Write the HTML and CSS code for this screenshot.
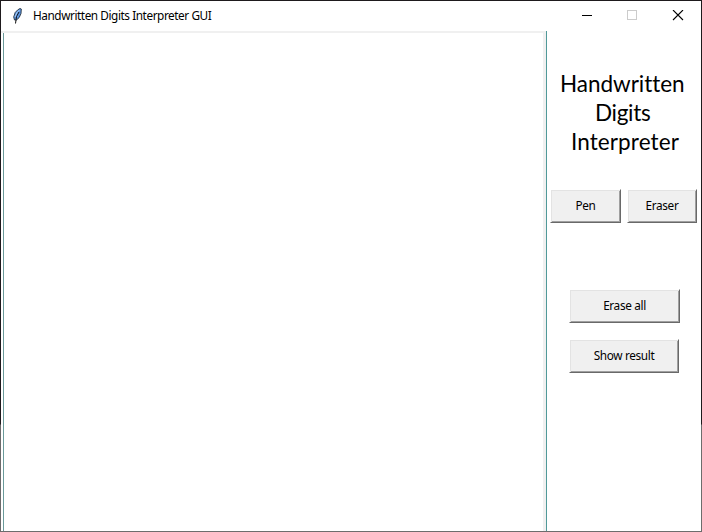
FILE: index.html
```html
<!DOCTYPE html>
<html lang="en">
<head>
<meta charset="utf-8">
<title>Handwritten Digits Interpreter GUI</title>
<link rel="stylesheet" href="styles.css">
</head>
<body>
<div class="window">
  <header class="titlebar">
    <svg class="feather" width="12" height="18" viewBox="0 0 12 18">
      <path d="M9 1.500 L10.300 2 L10 6.500 L8.200 10.500 L5.500 13 L3.500 13 L2.700 10 L4.200 5.500 L6.800 2.800 Z" fill="#5c95e0" stroke="#26323e" stroke-width=".9"/>
      <path d="M8 5 L5.500 9.500 L4.500 16.500" fill="none" stroke="#111" stroke-width="1"/>
      <path d="M4 10 L6 5.500 L8.500 3" fill="none" stroke="#a9cdf5" stroke-width="1"/>
    </svg>
    <span class="title">Handwritten Digits Interpreter GUI</span>
    <svg class="controls" width="103" height="12" viewBox="0 0 103 12" shape-rendering="crispEdges">
      <path d="M0 5.500H10" stroke="#000"/>
      <rect x="45.500" y="0.500" width="9" height="9" fill="none" stroke="#ccc"/>
      <path d="M91 0L101 10M101 0L91 10" stroke="#000" stroke-width="1.100" shape-rendering="auto"/>
    </svg>
  </header>
  <main class="content">
    <div class="canvas"></div>
    <aside class="panel">
      <h1><span class="l1">Handwritten</span><span class="l2">Digits</span><span class="l3">Interpreter</span></h1>
      <div class="tools">
        <button class="pen">Pen</button>
        <button class="eraser">Eraser</button>
      </div>
      <button class="clear">Erase all</button>
      <button class="result">Show result</button>
    </aside>
  </main>
</div>
</body>
</html>
```
FILE: styles.css
```css
* { box-sizing: border-box; }
body { margin: 0; background: #fff; color: #000; font: 12px "Noto Sans", sans-serif; }
.window {
  position: relative;
  width: 702px; height: 532px; display: flex; flex-direction: column; overflow: hidden;
  border: 1px solid;
  border-image: linear-gradient(#1e1a1d 424px, #6c6c6c 425px) 1;
}
/* desktop showing through the bottom edge */
.window::after {
  content: ""; position: absolute; left: 582px; bottom: -1px; width: 23px; height: 1px;
  background: linear-gradient(90deg, #2c2c2c 13px, #585858 13px);
}
.titlebar { height: 30px; display: flex; align-items: center; flex: none; padding-left: 10px; }
.feather { flex: none; margin-top: -1px; }
.title { width: 190px; margin: -2px 0 0 10px; white-space: nowrap; font-size: 11.8px; letter-spacing: -0.44px; }
.controls { margin-left: 359px; flex: none; }
.content { display: flex; flex: 1; min-height: 0; }
.canvas {
  width: 545px; border-top: 2px solid #f0f0f0; border-right: 3px solid #f0f0f0;
  padding-left: 2px; display: flex;
}
.canvas::before { content: ""; width: 1px; background: #6b9a9a; }
.panel {
  flex: 1; border-left: 1px solid #509999; display: flex; flex-direction: column;
  padding: 38px 0 0 3px;
}
h1 {
  margin: 0; font: 22.5px/29px Lato, sans-serif; height: 120px; display: flex;
  flex-direction: column; white-space: nowrap; font-variant-ligatures: none;
}
h1 span { align-self: flex-start; }
.l1 { margin-left: 10px; letter-spacing: -0.04px; }
.l2 { margin-left: 45px; letter-spacing: -0.3px; }
.l3 { margin-left: 21px; letter-spacing: 0.1px; }
.tools { display: flex; gap: 6px; margin-bottom: 66px; }
button {
  height: 34px; padding: 0 0 2px; border: 1px solid; border-color: #fff #696969 #696969 #fff;
  background: #f0f0f0; box-shadow: inset 1px 1px #e3e3e3, inset -1px -1px #a0a0a0;
  color: #000; font: 11.8px "Noto Sans", sans-serif; letter-spacing: -0.35px;
}
.pen { width: 71px; }
.eraser { width: 70px; }
.clear { width: 111px; margin: 0 0 16px 19px; }
.result { width: 110px; margin-left: 19px; }
```
